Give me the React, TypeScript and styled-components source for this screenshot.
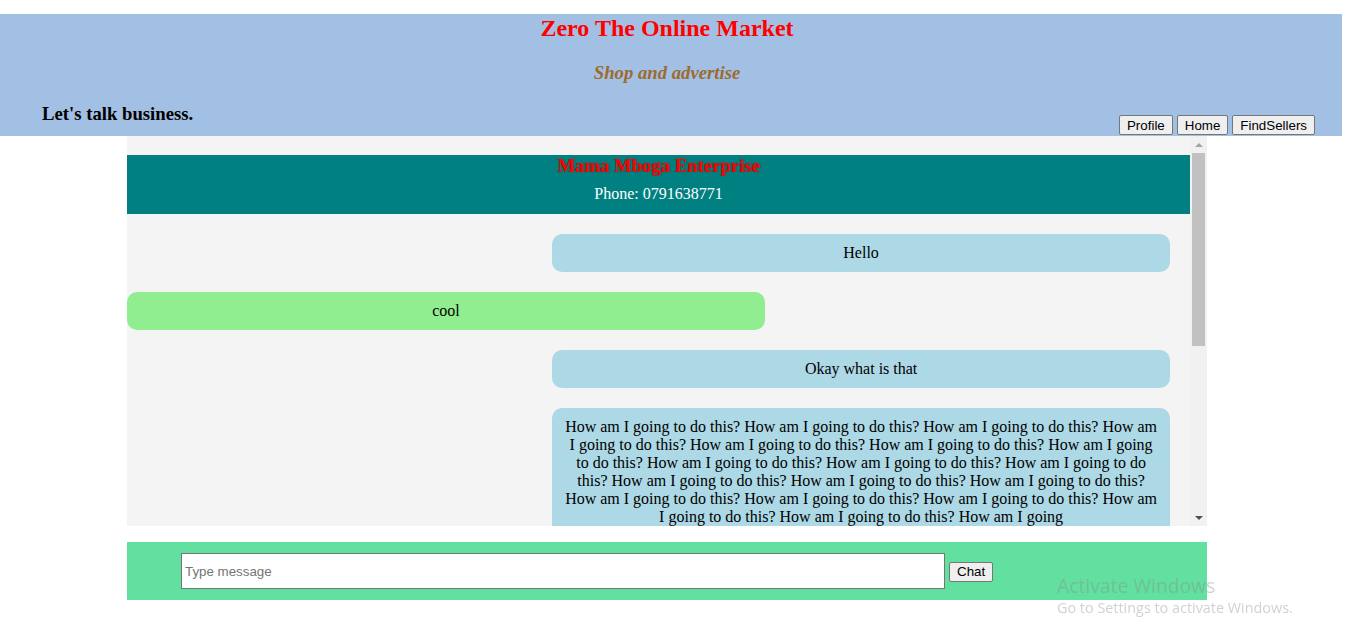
import React from "react";
import styled, { createGlobalStyle } from "styled-components";

const GlobalStyle = createGlobalStyle`
  html, body { margin: 0; padding: 0; background: #ffffff; }
  body { font-family: "Liberation Serif", "Times New Roman", serif; font-size: 16px; color: #000; }
`;

const Header = styled.header`
  margin: 14px 8px 0 0;
  background: #a2c0e4;
  display: flex;
  flex-direction: column;
`;

const Title = styled.h1`
  margin: 2px 8px 0 0;
  text-align: center;
  font-size: 24px;
  line-height: 24px;
  font-weight: bold;
  color: #ff0000;
`;

const Subtitle = styled.h3`
  margin: 22px 8px 0 0;
  text-align: center;
  font-size: 18.72px;
  line-height: 22px;
  font-weight: bold;
  font-style: italic;
  color: #9c6b30;
`;

const BottomRow = styled.div`
  height: 52px;
  display: flex;
  justify-content: space-between;
  align-items: flex-end;
  padding: 0 27px 0 42px;
`;

const Tagline = styled.h3`
  margin: 0 0 11px;
  font-size: 18.72px;
  line-height: 22px;
  font-weight: bold;
`;

const NavButtons = styled.nav`
  display: flex;
  gap: 4px;
  margin-bottom: 1px;
`;

const Button = styled.button`
  font-family: "Liberation Sans", Arial, sans-serif;
  font-size: 13.33px;
  height: 20px;
  padding: 1px 7px;
  background: #efefef;
  border: 1px solid #767676;
  border-radius: 2px;
  color: #000;
  line-height: 15px;
`;

const ChatPanel = styled.main`
  margin-left: 127px;
  width: 1080px;
  height: 390px;
  background: #f4f4f4;
  display: flex;
`;

const ChatScroll = styled.div`
  flex: 1;
  min-width: 0;
  overflow: hidden;
  display: flex;
  flex-direction: column;
`;

const ScrollTrack = styled.div`
  flex: none;
  width: 17px;
  background: #f1f1f1;
  display: flex;
  flex-direction: column;
  align-items: center;
`;

const ScrollArrow = styled.div<{ $down?: boolean }>`
  flex: none;
  height: 17px;
  width: 17px;
  display: flex;
  align-items: center;
  justify-content: center;
  &::after {
    content: "";
    width: 0;
    height: 0;
    border-left: 4px solid transparent;
    border-right: 4px solid transparent;
    ${(p) =>
      p.$down
        ? "border-top: 4px solid #505050;"
        : "border-bottom: 4px solid #a3a3a3;"}
  }
`;

const ScrollThumb = styled.div`
  flex: none;
  width: 13px;
  height: 193px;
  background: #c1c1c1;
`;

const ScrollRest = styled.div`
  flex: 1;
`;

const SellerBar = styled.section`
  flex: none;
  margin-top: 19px;
  height: 59px;
  box-sizing: border-box;
  background: #008080;
  text-align: center;
`;

const SellerName = styled.h3`
  margin: 0;
  font-size: 18.72px;
  line-height: 22px;
  font-weight: bold;
  color: #ff0000;
  text-shadow: 1px 0 1px rgba(70, 0, 0, 0.55);
`;

const SellerPhone = styled.p`
  margin: 8px 0 0;
  color: #ffffff;
  font-size: 16px;
`;

const Messages = styled.div`
  display: flex;
  flex-direction: column;
  gap: 20px;
  padding: 20px 0;
`;

const Bubble = styled.div<{ $mine: boolean }>`
  flex: none;
  box-sizing: border-box;
  padding: 10px;
  border-radius: 10px;
  text-align: center;
  font-size: 16px;
  background: ${(p) => (p.$mine ? "#add8e6" : "#90ee90")};
  margin: ${(p) => (p.$mine ? "0 20px 0 40%" : "0 40% 0 0")};
`;

const Composer = styled.form`
  margin: 16px 0 0 127px;
  width: 1080px;
  box-sizing: border-box;
  height: 58px;
  background: #62e0a0;
  display: flex;
  align-items: center;
  gap: 4px;
  padding-left: 54px;
`;

const MessageInput = styled.input`
  width: 764px;
  height: 36px;
  box-sizing: border-box;
  border: 1px solid #767676;
  padding: 1px 3px;
  font-family: "Liberation Sans", Arial, sans-serif;
  font-size: 13.33px;
  background: #fff;
  &::placeholder { color: #757575; }
`;

const ChatButton = styled(Button)`
  height: 20px;
  padding: 1px 7px;
  margin-top: 1px;
`;

const Watermark = styled.div`
  position: fixed;
  left: 1057px;
  top: 573px;
  font-family: "Open Sans", "Noto Sans", sans-serif;
  color: rgba(140, 140, 140, 0.4);
  pointer-events: none;
`;

const WatermarkTitle = styled.div`
  font-size: 19.3px;
  line-height: 25px;
`;

const WatermarkSub = styled.div`
  font-size: 14.4px;
  line-height: 20px;
`;

const phrase = "How am I going to do this?";
const longText = Array.from({ length: 18 }, () => phrase).join(" ") + " How am I going";

const messages = [
  { mine: true, text: "Hello" },
  { mine: false, text: "cool" },
  { mine: true, text: "Okay what is that" },
  { mine: true, text: longText },
];

export default function App() {
  return (
    <>
      <GlobalStyle />
      <Header>
        <Title>Zero The Online Market</Title>
        <Subtitle>Shop and advertise</Subtitle>
        <BottomRow>
          <Tagline>Let's talk business.</Tagline>
          <NavButtons>
            <Button>Profile</Button>
            <Button>Home</Button>
            <Button>FindSellers</Button>
          </NavButtons>
        </BottomRow>
      </Header>
      <ChatPanel>
        <ChatScroll>
          <SellerBar>
            <SellerName>Mama Mboga Enterprise</SellerName>
            <SellerPhone>Phone: 0791638771</SellerPhone>
          </SellerBar>
          <Messages>
            {messages.map((m, i) => (
              <Bubble key={i} $mine={m.mine}>
                {m.text}
              </Bubble>
            ))}
          </Messages>
        </ChatScroll>
        <ScrollTrack aria-hidden="true">
          <ScrollArrow />
          <ScrollThumb />
          <ScrollRest />
          <ScrollArrow $down />
        </ScrollTrack>
      </ChatPanel>
      <Composer onSubmit={(e) => e.preventDefault()}>
        <MessageInput placeholder="Type message" />
        <ChatButton type="submit">Chat</ChatButton>
      </Composer>
      <Watermark>
        <WatermarkTitle>Activate Windows</WatermarkTitle>
        <WatermarkSub>Go to Settings to activate Windows.</WatermarkSub>
      </Watermark>
    </>
  );
}
